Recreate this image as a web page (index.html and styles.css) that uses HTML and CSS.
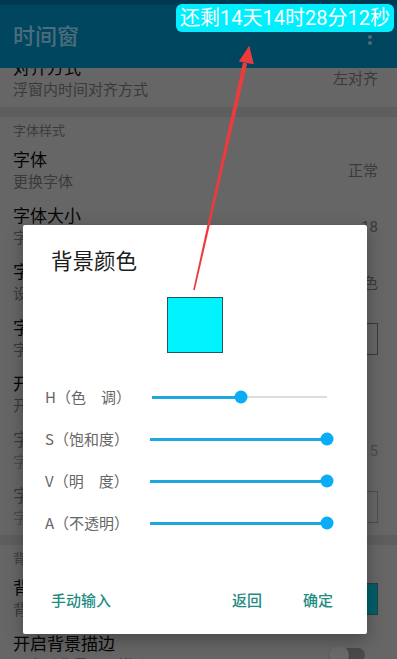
FILE: index.html
```html
<!DOCTYPE html>
<html lang="zh-CN">
<head>
<meta charset="utf-8">
<title>时间窗</title>
<link rel="stylesheet" href="styles.css">
</head>
<body>
<div class="screen">
  <div class="statusbar"></div>
  <header class="appbar">
    <h1 class="appbar-title">时间窗</h1>
    <div class="overflow"><span></span><span></span><span></span></div>
  </header>
  <main class="list">
    <div class="list-inner">
      <div class="pref">
        <div class="pref-text">
          <div class="pref-title">对齐方式</div>
          <div class="pref-sub">浮窗内时间对齐方式</div>
        </div>
        <div class="pref-value">左对齐</div>
      </div>
      <div class="cat">字体样式</div>
      <div class="pref">
        <div class="pref-text">
          <div class="pref-title">字体</div>
          <div class="pref-sub">更换字体</div>
        </div>
        <div class="pref-value">正常</div>
      </div>
      <div class="pref">
        <div class="pref-text">
          <div class="pref-title">字体大小</div>
          <div class="pref-sub">字体显示大小</div>
        </div>
        <div class="pref-value">18</div>
      </div>
      <div class="pref">
        <div class="pref-text">
          <div class="pref-title">字体颜色</div>
          <div class="pref-sub">设置字体颜色</div>
        </div>
        <div class="pref-value">白色</div>
      </div>
      <div class="pref">
        <div class="pref-text">
          <div class="pref-title">字体阴影颜色</div>
          <div class="pref-sub">字体阴影颜色</div>
        </div>
        <div class="color-box"></div>
      </div>
      <div class="pref">
        <div class="pref-text">
          <div class="pref-title">开启字体描边</div>
          <div class="pref-sub">开启后字体显示描边</div>
        </div>
        <div class="switch"><span class="switch-track"></span><span class="switch-thumb"></span></div>
      </div>
      <div class="pref disabled">
        <div class="pref-text">
          <div class="pref-title">字体描边宽度</div>
          <div class="pref-sub">字体描边宽度</div>
        </div>
        <div class="pref-value">5</div>
      </div>
      <div class="pref disabled">
        <div class="pref-text">
          <div class="pref-title">字体描边颜色</div>
          <div class="pref-sub">字体描边颜色</div>
        </div>
        <div class="color-box"></div>
      </div>
      <div class="cat">背景样式</div>
      <div class="pref">
        <div class="pref-text">
          <div class="pref-title">背景颜色</div>
          <div class="pref-sub">背景颜色设置</div>
        </div>
        <div class="color-box color-box-cyan"></div>
      </div>
      <div class="pref">
        <div class="pref-text">
          <div class="pref-title">开启背景描边</div>
          <div class="pref-sub">开启后背景显示描边</div>
        </div>
        <div class="switch"><span class="switch-track"></span><span class="switch-thumb"></span></div>
      </div>
    </div>
  </main>

  <div class="dialog">
    <h2 class="dialog-title">背景颜色</h2>
    <div class="swatch"></div>
    <div class="sliders">
      <div class="slider-row">
        <span class="slider-label">H（色　调）</span>
        <div class="slider">
          <div class="track"><div class="fill" style="width:50.9%"></div></div>
          <div class="thumb" style="left:50.9%"></div>
        </div>
      </div>
      <div class="slider-row">
        <span class="slider-label">S（饱和度）</span>
        <div class="slider">
          <div class="track"><div class="fill" style="width:100%"></div></div>
          <div class="thumb" style="left:100%"></div>
        </div>
      </div>
      <div class="slider-row">
        <span class="slider-label">V（明　度）</span>
        <div class="slider">
          <div class="track"><div class="fill" style="width:100%"></div></div>
          <div class="thumb" style="left:100%"></div>
        </div>
      </div>
      <div class="slider-row">
        <span class="slider-label">A（不透明）</span>
        <div class="slider">
          <div class="track"><div class="fill" style="width:100%"></div></div>
          <div class="thumb" style="left:100%"></div>
        </div>
      </div>
    </div>
    <div class="dialog-actions">
      <button class="btn">手动输入</button>
      <div class="actions-right">
        <button class="btn">返回</button>
        <button class="btn">确定</button>
      </div>
    </div>
  </div>

  <svg class="arrow" width="397" height="659" viewBox="0 0 397 659" aria-hidden="true">
    <polygon class="arrow-shape" points="247.2,63.4 243,62.6 193.2,289.8 194.8,290.2"/>
    <polygon class="arrow-shape" points="249.3,45.5 238.8,61.6 253.8,64.2"/>
  </svg>

  <div class="badge">还剩14天14时28分12秒</div>
</div>
</body>
</html>
```

FILE: styles.css
```css
* {
  box-sizing: border-box;
}

html,
body {
  margin: 0;
  padding: 0;
}

body {
  width: 397px;
  height: 659px;
  overflow: hidden;
  background: #666666;
  font-family: Roboto, "Noto Sans CJK SC", sans-serif;
}

.screen {
  position: relative;
  width: 397px;
  height: 659px;
  display: flex;
  flex-direction: column;
  overflow: hidden;
}

/* ---------- top bars ---------- */
.statusbar {
  flex: none;
  height: 5px;
  background: #003a52;
}

.appbar {
  flex: none;
  height: 63px;
  background: #01465f;
  display: flex;
  align-items: center;
  justify-content: space-between;
  padding: 0 25px 0 13px;
}

.appbar-title {
  margin: 0;
  font-size: 22px;
  line-height: 28px;
  font-weight: 500;
  color: #4b6d7b;
}

.overflow {
  display: flex;
  flex-direction: column;
  gap: 2.5px;
}

.overflow span {
  width: 4px;
  height: 4px;
  border-radius: 50%;
  background: #4b6d7b;
}

/* ---------- preference list ---------- */
.list {
  flex: 1;
  overflow: hidden;
  background: #666666;
}

.list-inner {
  margin-top: -17px;
}

.pref {
  height: 56px;
  display: flex;
  align-items: center;
  padding: 6px 19px 6px 13px;
}

.pref-text {
  flex: 1;
  min-width: 0;
}

.pref-title {
  font-size: 17px;
  line-height: 22px;
  color: #050505;
  white-space: nowrap;
}

.pref-sub {
  font-size: 15px;
  line-height: 22px;
  color: #3a3a3a;
  white-space: nowrap;
}

.pref-value {
  font-size: 15px;
  line-height: 22px;
  color: #3a3a3a;
}

.pref.disabled .pref-title {
  color: #3c3c3c;
}

.pref.disabled .pref-sub,
.pref.disabled .pref-value {
  color: #4c4c4c;
}

.color-box {
  width: 32px;
  height: 32px;
  border: 1px solid #3a3a3a;
}

.pref.disabled .color-box {
  border-color: #4e4e4e;
}

.color-box-cyan {
  background: #00606a;
  border-color: #2c3c3e;
}

.cat {
  border-top: 10px solid #5e5e5e;
  padding: 6px 13px 4px;
  font-size: 13px;
  line-height: 16px;
  color: #3c3c3c;
}

.switch {
  position: relative;
  width: 36px;
  height: 20px;
  margin-right: 13px;
  display: flex;
  align-items: center;
}

.switch-track {
  width: 34px;
  height: 14px;
  margin-left: 2px;
  border-radius: 7px;
  background: #4a4a4a;
}

.switch-thumb {
  position: absolute;
  left: 0;
  top: 0;
  width: 20px;
  height: 20px;
  border-radius: 50%;
  background: #6a6a6a;
  box-shadow: 0 1px 2px rgba(0, 0, 0, 0.35);
}

/* ---------- dialog ---------- */
.dialog {
  position: absolute;
  left: 23px;
  top: 225px;
  width: 344px;
  height: 409px;
  background: #ffffff;
  border-radius: 2px;
  box-shadow: 0 6px 18px rgba(0, 0, 0, 0.3);
  display: flex;
  flex-direction: column;
  padding: 23px 0 9px;
}

.dialog-title {
  margin: 0 0 0 28px;
  font-size: 21.5px;
  line-height: 28px;
  font-weight: 400;
  color: #1c1c1c;
}

.swatch {
  width: 56px;
  height: 56px;
  margin: 21px auto 0;
  background: #00f4ff;
  border: 1px solid #24585d;
}

.sliders {
  margin-top: 23px;
}

.slider-row {
  height: 42px;
  display: flex;
  align-items: center;
  padding: 0 40px 0 22px;
}

.slider-label {
  font-family: "Noto Sans CJK SC", sans-serif;
  font-size: 15px;
  line-height: 20px;
  color: #666666;
  white-space: nowrap;
}

.slider {
  position: relative;
  flex: 1;
  margin-left: 21px;
  height: 14px;
  display: flex;
  align-items: center;
}

.track {
  width: 100%;
  height: 2px;
  background: #dddddd;
  display: flex;
  align-items: center;
}

.fill {
  height: 3px;
  background: #1ea6df;
}

.thumb {
  position: absolute;
  top: 50%;
  width: 13px;
  height: 13px;
  border-radius: 50%;
  background: #08adf6;
  transform: translate(-50%, -50%);
}

.dialog-actions {
  margin-top: auto;
  height: 48px;
  display: flex;
  align-items: center;
  justify-content: space-between;
  padding: 0 34px 0 28px;
}

.actions-right {
  display: flex;
  gap: 41px;
}

.btn {
  margin: 0;
  padding: 0;
  border: 0;
  background: none;
  font-family: inherit;
  font-size: 15px;
  line-height: 22px;
  font-weight: 500;
  color: #1f8c82;
}

/* ---------- floating overlays ---------- */
.arrow {
  position: absolute;
  left: 0;
  top: 0;
  pointer-events: none;
}

.arrow-shape {
  fill: #ec3b3d;
}

.badge {
  position: absolute;
  left: 176px;
  top: 4px;
  height: 28px;
  padding: 0 4px;
  border-radius: 6px;
  background: #00efff;
  color: #ffffff;
  font-size: 20px;
  line-height: 28px;
  white-space: nowrap;
}
```
